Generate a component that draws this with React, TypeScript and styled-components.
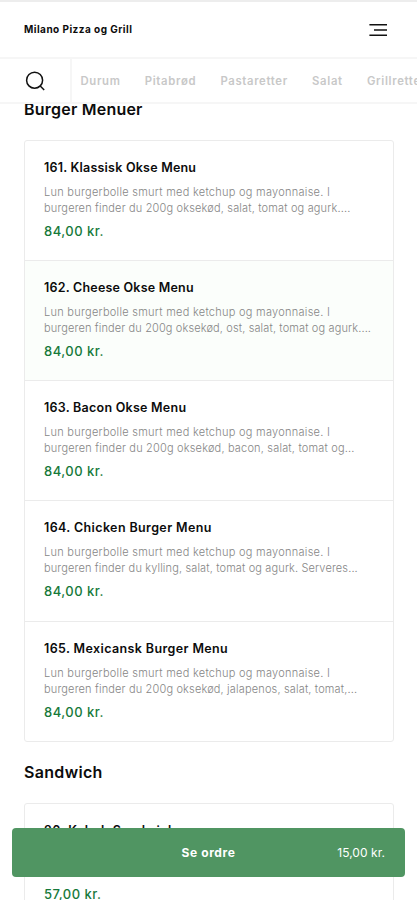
import React from "react";
import styled, { createGlobalStyle } from "styled-components";

const GlobalStyle = createGlobalStyle`
  * { box-sizing: border-box; }
  html, body { margin: 0; padding: 0; }
  body {
    background: #fff;
    color: #0c0c0c;
    font-family: Inter, "Open Sans", "Liberation Sans", sans-serif;
  }
  h1, h2, h3, p { margin: 0; }
`;

const Screen = styled.div`
  height: 900px;
  overflow: hidden;
  display: flex;
  flex-direction: column;
  border-top: 2px solid #ededed;
  position: relative;
`;

const Header = styled.header`
  flex: none;
  height: 57px;
  display: flex;
  align-items: center;
  justify-content: space-between;
  padding: 0 30px 0 24px;
  border-bottom: 2px solid #f6f6f6;
`;

const Brand = styled.h1`
  font-size: 10px;
  line-height: 16px;
  font-weight: 700;
  letter-spacing: 0.46px;
  padding-bottom: 2px;
`;

const IconButton = styled.button`
  display: flex;
  padding: 0;
  border: 0;
  background: none;
  color: #111;
`;

const CategoryBar = styled.nav`
  flex: none;
  height: 45px;
  display: flex;
  border-bottom: 2px solid #f6f6f6;
`;

const SearchCell = styled.div`
  flex: none;
  width: 72px;
  display: flex;
  align-items: center;
  padding-left: 25px;
  border-right: 2px solid #f6f6f6;
`;

const Categories = styled.div`
  flex: 1;
  min-width: 0;
  overflow: hidden;
  display: flex;
  align-items: center;
  gap: 24.2px;
  padding-left: 8.5px;
`;

const Category = styled.span`
  flex: none;
  font-size: 11.3px;
  line-height: 16px;
  font-weight: 600;
  color: #c8c8c8;
  white-space: nowrap;
  letter-spacing: 0.68px;
`;

const Content = styled.main`
  flex: 1;
  min-height: 0;
  overflow: hidden;
  padding: 0 23px 0 24px;
`;

const Section = styled.section<{ $shift: number }>`
  margin-top: ${(p) => p.$shift}px;
`;

const SectionTitle = styled.h2<{ $track: number }>`
  font-size: 16px;
  line-height: 24px;
  font-weight: 600;
  margin-bottom: 19px;
  letter-spacing: ${(p) => p.$track}px;
`;

const Card = styled.div`
  border: 1px solid #ebebeb;
  border-radius: 3px;
`;

const Item = styled.article<{ $active?: boolean }>`
  height: 120px;
  padding: 18px 0 0 19px;
  background: ${(p) => (p.$active ? "#fbfefb" : "transparent")};
  &:first-child { height: 119px; }
  &:nth-child(4) { height: 121px; }
  & + & { border-top: 1px solid #ebebeb; }
`;

const ItemTitle = styled.h3<{ $track: number }>`
  font-size: 12.5px;
  line-height: 18px;
  font-weight: 600;
  white-space: nowrap;
  letter-spacing: ${(p) => p.$track}px;
`;

const Description = styled.div`
  margin-top: 7px;
`;

const DescriptionLine = styled.p<{ $track: number }>`
  font-size: 11px;
  line-height: 16px;
  font-weight: 300;
  color: #868686;
  white-space: nowrap;
  letter-spacing: ${(p) => p.$track}px;
`;

const Price = styled.p`
  margin-top: 6px;
  font-size: 13px;
  line-height: 18px;
  font-weight: 500;
  color: #16793a;
  letter-spacing: 0.48px;
`;

const OrderBar = styled.button`
  position: absolute;
  left: 12px;
  right: 12px;
  top: 826px;
  height: 49px;
  display: grid;
  grid-template-columns: 1fr auto 1fr;
  align-items: center;
  padding: 0 20px;
  border: 0;
  border-radius: 4px;
  background: #509562;
  color: #fff;
  font-family: inherit;
`;

const OrderLabel = styled.span`
  grid-column: 2;
  font-size: 12px;
  font-weight: 700;
  letter-spacing: 0.6px;
`;

const OrderTotal = styled.span`
  justify-self: end;
  font-size: 12px;
  font-weight: 400;
  letter-spacing: 0.05px;
`;

const categories = ["Durum", "Pitabrød", "Pastaretter", "Salat", "Grillretter"];

type Line = { text: string; track: number };
type MenuItem = { title: string; track: number; lines: Line[]; price: string; active?: boolean };

const intro: Line = { text: "Lun burgerbolle smurt med ketchup og mayonnaise. I", track: 0.27 };

const burgers: MenuItem[] = [
  {
    title: "161. Klassisk Okse Menu",
    track: 0.22,
    lines: [intro, { text: "burgeren finder du 200g oksekød, salat, tomat og agurk....", track: 0.16 }],
    price: "84,00 kr.",
  },
  {
    title: "162. Cheese Okse Menu",
    track: 0.21,
    lines: [intro, { text: "burgeren finder du 200g oksekød, ost, salat, tomat og agurk....", track: 0.13 }],
    price: "84,00 kr.",
    active: true,
  },
  {
    title: "163. Bacon Okse Menu",
    track: 0.25,
    lines: [intro, { text: "burgeren finder du 200g oksekød, bacon, salat, tomat og...", track: 0.18 }],
    price: "84,00 kr.",
  },
  {
    title: "164. Chicken Burger Menu",
    track: 0.38,
    lines: [intro, { text: "burgeren finder du kylling, salat, tomat og agurk. Serveres...", track: 0.135 }],
    price: "84,00 kr.",
  },
  {
    title: "165. Mexicansk Burger Menu",
    track: 0.38,
    lines: [intro, { text: "burgeren finder du 200g oksekød, jalapenos, salat, tomat,...", track: 0.155 }],
    price: "84,00 kr.",
  },
];

const sandwiches: MenuItem[] = [
  {
    title: "26. Kebab Sandwich",
    track: 0.48,
    lines: [
      { text: "\u00a0", track: 0 },
      { text: "\u00a0", track: 0 },
    ],
    price: "57,00 kr.",
  },
];

const SearchIcon = () => (
  <svg width="20" height="20" viewBox="0 0 20 20" fill="none" stroke="currentColor" strokeWidth="1.5">
    <circle cx="9.6" cy="9.2" r="8" />
    <path d="M15 14.8 L19.2 19" />
  </svg>
);

const MenuIcon = () => (
  <svg width="18" height="14" viewBox="0 0 18 14" fill="none" stroke="currentColor" strokeWidth="1.6">
    <path d="M0.4 1.8H18M5 7H18M0.4 12.2H18" />
  </svg>
);

const MenuCard = ({ items }: { items: MenuItem[] }) => (
  <Card>
    {items.map((item) => (
      <Item key={item.title} $active={item.active}>
        <ItemTitle $track={item.track}>{item.title}</ItemTitle>
        <Description>
          {item.lines.map((line, i) => (
            <DescriptionLine key={i} $track={line.track}>
              {line.text}
            </DescriptionLine>
          ))}
        </Description>
        <Price>{item.price}</Price>
      </Item>
    ))}
  </Card>
);

export default function App() {
  return (
    <Screen>
      <GlobalStyle />
      <Header>
        <Brand>Milano Pizza og Grill</Brand>
        <IconButton aria-label="Menu">
          <MenuIcon />
        </IconButton>
      </Header>
      <CategoryBar>
        <SearchCell>
          <IconButton aria-label="Søg">
            <SearchIcon />
          </IconButton>
        </SearchCell>
        <Categories>
          {categories.map((name) => (
            <Category key={name}>{name}</Category>
          ))}
        </Categories>
      </CategoryBar>
      <Content>
        <Section $shift={-7}>
          <SectionTitle $track={0.22}>Burger Menuer</SectionTitle>
          <MenuCard items={burgers} />
        </Section>
        <Section $shift={18}>
          <SectionTitle $track={0.33}>Sandwich</SectionTitle>
          <MenuCard items={sandwiches} />
        </Section>
      </Content>
      <OrderBar>
        <OrderLabel>Se ordre</OrderLabel>
        <OrderTotal>15,00 kr.</OrderTotal>
      </OrderBar>
    </Screen>
  );
}
